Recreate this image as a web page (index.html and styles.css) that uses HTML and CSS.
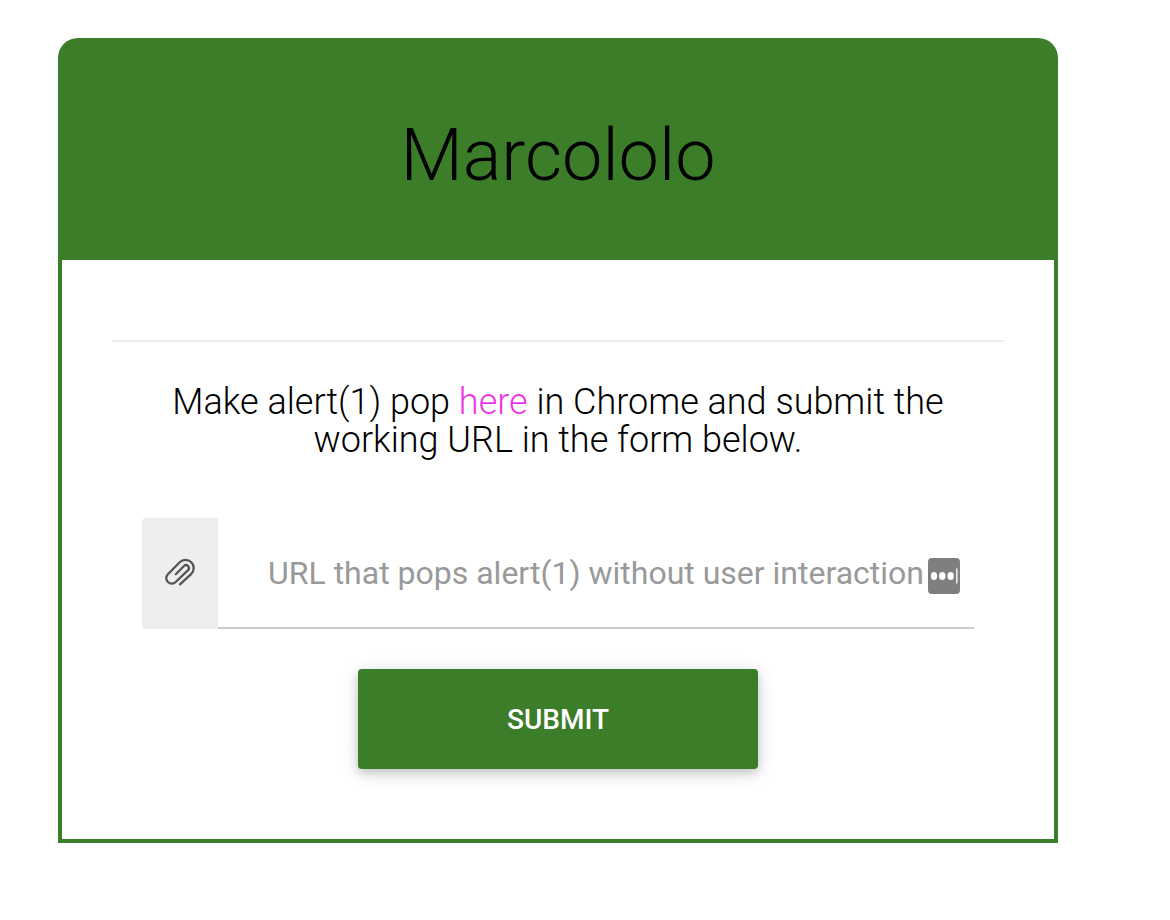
FILE: index.html
```html
<!DOCTYPE html>
<html lang="en">
<head>
<meta charset="utf-8">
<title>Marcololo</title>
<link rel="stylesheet" href="styles.css">
</head>
<body>
<main class="card">
  <header class="card-header"><h1 class="title">Marcololo</h1></header>
  <div class="card-body">
    <hr class="divider">
    <p class="intro">Make alert(1) pop <a class="link" href="#">here</a> in Chrome and submit the working URL in the form below.</p>
    <form class="form">
      <div class="field">
        <label class="field-icon" for="url" aria-label="URL">
          <svg class="clip" viewBox="0 0 32 32" fill="none" stroke="#555" stroke-width="2.3" stroke-linecap="round" stroke-linejoin="round"><path d="M11.8 16.2 L20 8 A2.9 2.9 0 0 1 24.1 12.1 L11.7 24 A5.5 5.5 0 0 1 3.9 16.2 L15.7 4.2 A8.2 8.2 0 0 1 27.3 15.8 L16 26.4"/></svg>
        </label>
        <input class="input" id="url" type="text" placeholder="URL that pops alert(1) without user interaction">
        <button class="fill" type="button" aria-label="Fill field">
          <svg class="fill-icon" viewBox="0 0 32 36"><g fill="#fff"><ellipse cx="6" cy="18" rx="3.2" ry="3.9"/><ellipse cx="14.3" cy="18" rx="3.2" ry="3.9"/><ellipse cx="22.7" cy="18" rx="3.2" ry="3.9"/><rect x="28.2" y="10.5" width="1.3" height="15"/></g></svg>
        </button>
      </div>
      <button class="submit" type="submit">SUBMIT</button>
    </form>
  </div>
</main>
</body>
</html>
```
FILE: styles.css
```css
* { box-sizing: border-box; }
body { margin: 0; padding: 38px 112px 0 58px; background: #fff; color: #000; font-family: Roboto, "Liberation Sans", sans-serif; }
.card { max-width: 1000px; }
.card-header { padding: 78px 20px 64px; background: #3b7d28; border-radius: 20px 20px 0 0; text-align: center; }
.title { margin: 0; font-size: 72px; line-height: 80px; font-weight: 300; }
.card-body { padding: 80px 50px 70px; border: 4px solid #3b7d28; border-top: 0; }
.divider { height: 2px; margin: 0 0 41px; border: 0; background: #eee; }
.intro { margin: 0 30px 59px; font-size: 36px; line-height: 38px; font-weight: 300; text-align: center; }
.link { color: #ee35e4; text-decoration: none; }
.form { display: flex; flex-direction: column; align-items: center; gap: 40px; padding: 0 30px; }
.field { position: relative; display: flex; align-self: stretch; height: 111px; }
.field-icon { display: flex; align-items: center; justify-content: center; width: 76px; background: #eee; border-radius: 4px 0 0 4px; }
.clip { width: 32px; height: 32px; }
.input { flex: 1; min-width: 0; padding: 0 0 0 50px; border: 0; border-bottom: 2px solid #ccc; background: #fff; font: 400 32px Roboto, sans-serif; outline: 0; }
.input::placeholder { color: #999; opacity: 1; }
.fill { position: absolute; right: 14px; top: 40px; width: 32px; height: 36px; padding: 0; border: 0; border-radius: 4px; background: #7f7f7f; }
.fill-icon { display: block; width: 32px; height: 36px; }
.submit { width: 400px; max-width: 100%; height: 100px; border: 0; border-radius: 4px; background: #3b7d28; color: #fff; font: 500 28px Roboto, sans-serif; box-shadow: 0 4px 10px rgba(0,0,0,.16), 0 4px 20px rgba(0,0,0,.12); }
```
